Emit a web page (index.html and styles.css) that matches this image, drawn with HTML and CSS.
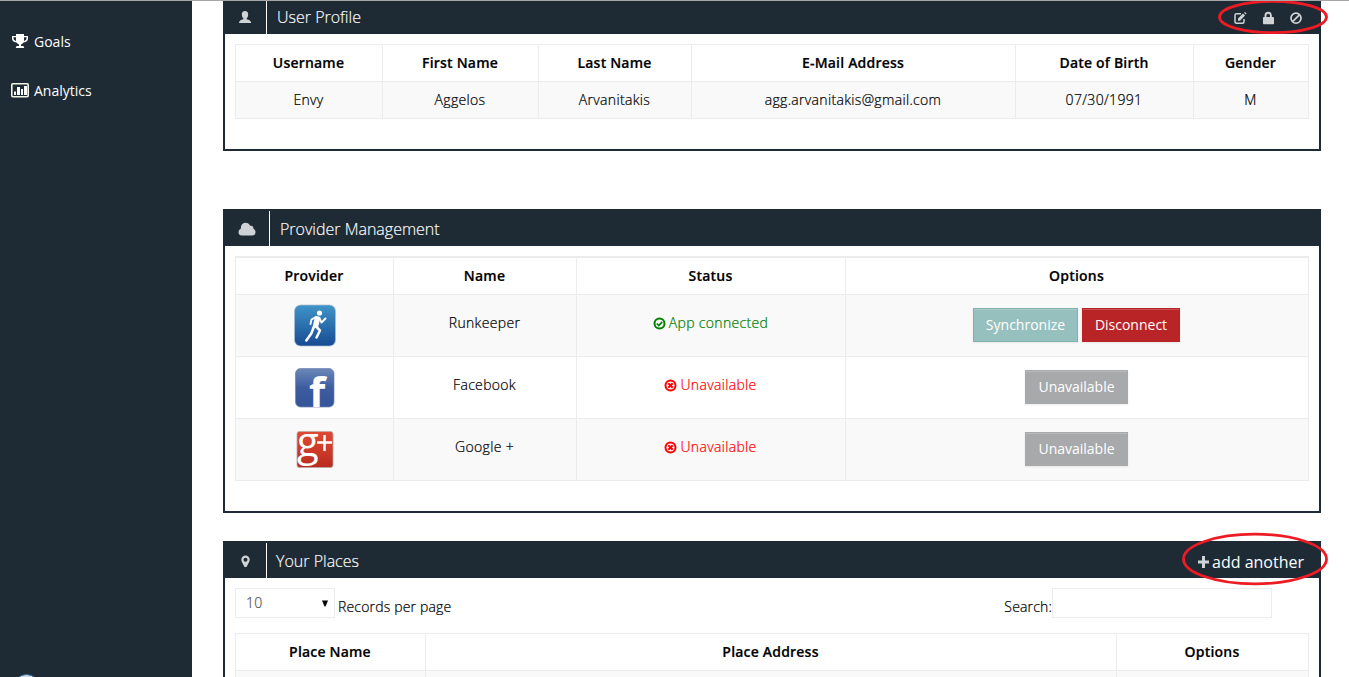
FILE: index.html
```html
<!DOCTYPE html>
<html lang="en">
<head>
<meta charset="utf-8">
<title>User Profile</title>
<link rel="stylesheet" href="styles.css">
</head>
<body>
<div class="page">
  <nav class="sidebar">
    <a class="nav-item"><svg class="nav-icon" width="18" height="18" viewBox="0 0 18 18"><path d="M5 1h8v2h4v2.500q0 3.500-4.500 4-1 1.500-2.500 2v1.500h2q1 0 1.200 2H4.800q.2-2 1.200-2h2v-1.500q-1.500-.5-2.500-2Q1 9 1 5.500V3h4zM2.500 4.200v1.300q0 1.800 2.400 2.500Q5 6 5 4.200zm10.500 0q0 2 .1 3.800 2.400-.7 2.400-2.500V4.200z" fill="#fff" fill-rule="evenodd"/></svg><span>Goals</span></a>
    <a class="nav-item"><svg class="nav-icon" width="18" height="18" viewBox="0 0 18 18"><rect x=".8" y="1.800" width="16.400" height="13" rx="1" fill="none" stroke="#f3f3e8" stroke-width="1.600"/><path d="M3 9.500h2V13H3zM6 5h3v8H6zM10 7h2v6h-2zM13 4h3v9h-3z" fill="#fff"/></svg><span>Analytics</span></a>
    <span class="orb"></span>
  </nav>
  <main class="content">
    <section class="panel profile">
      <header class="panel-head">
        <div class="head-icon"><svg width="14" height="14" viewBox="0 0 14 14"><path d="M7 0q3.200 0 3.200 3.500 0 2.500-1.500 3.700v1.100q4 .7 4.500 3.700H1q.3-3 4.300-3.700V7.200Q3.800 6 3.800 3.500 3.800 0 7 0z" fill="#d0d3d5"/></svg></div>
        <h2>User Profile</h2>
        <div class="tools">
          <svg width="14" height="14" viewBox="0 0 14 14"><path d="M8 2.800H3.500Q2 2.800 2 4.300v6.400q0 1.500 1.500 1.500h6q1.500 0 1.500-1.500V8" fill="none" stroke="#d0d3d5" stroke-width="1.500"/><path d="M5 9.800V7.500L10 2.600l2 2L7 9.800zM11 1.800l1-.9 1.600 1.600-.8.900z" fill="#d0d3d5"/></svg>
          <svg width="14" height="14" viewBox="0 0 14 14"><path d="M4.500 7V4.500a2.700 2.700 0 0 1 5.400 0V7" fill="none" stroke="#d0d3d5" stroke-width="1.900"/><rect x="2" y="6" width="11" height="7.300" rx=".8" fill="#d0d3d5"/></svg>
          <svg width="14" height="14" viewBox="0 0 14 14"><circle cx="7" cy="7.200" r="5" fill="none" stroke="#d0d3d5" stroke-width="1.700"/><path d="M3.600 10.600l6.800-6.800" stroke="#d0d3d5" stroke-width="1.700"/></svg>
        </div>
        <svg class="ring ring-tools" width="110" height="36" viewBox="0 0 110 36"><ellipse cx="55" cy="18" rx="53.500" ry="15.700"/></svg>
      </header>
      <table class="grid">
        <colgroup><col class="w147"><col class="w156"><col class="w153"><col class="w324"><col class="w178"><col class="w115"></colgroup>
        <tr><th>Username</th><th>First Name</th><th>Last Name</th><th>E-Mail Address</th><th>Date of Birth</th><th>Gender</th></tr>
        <tr class="odd"><td>Envy</td><td>Aggelos</td><td>Arvanitakis</td><td>agg.arvanitakis@gmail.com</td><td>07/30/1991</td><td>M</td></tr>
      </table>
    </section>

    <section class="panel providers">
      <header class="panel-head">
        <div class="head-icon wide"><svg width="18" height="14" viewBox="0 0 18 14"><path d="M4 13.500Q.5 13.500.5 10q0-2.500 2.300-3.200-.2-5.500 4.700-6 3.300 0 4.600 3 3.300-.6 3.400 3Q17.500 7.700 17.500 10q0 3.500-3.500 3.500z" fill="#d0d3d5"/></svg></div>
        <h2>Provider Management</h2>
      </header>
      <table class="grid double">
        <colgroup><col class="w158"><col class="w183"><col class="w269"><col class="w463"></colgroup>
        <tr><th>Provider</th><th>Name</th><th>Status</th><th>Options</th></tr>
        <tr class="tall odd">
          <td><svg class="logo" width="44" height="44" viewBox="0 0 44 44"><defs><linearGradient id="run" x2="0" y2="1"><stop offset="0" stop-color="#3f94c9"/><stop offset="1" stop-color="#184b92"/></linearGradient></defs><rect x="1.500" y="2" width="41" height="41" rx="6" fill="url(#run)" stroke="#a9bfd2" stroke-width=".7"/><circle cx="26.500" cy="10" r="2.600" fill="#fff"/><path d="M23 14l-4.500 2.500-1 4.500M26.500 15.500l2 4 4-4" fill="none" stroke="#fff" stroke-width="1.900" stroke-linecap="round" stroke-linejoin="round"/><path d="M22 13q4-.5 5.500 1.500L25 24.500l-5.500.5z" fill="#fff"/><path d="M20.800 24l-2.500 6.500-5 7M23.500 24l3.500 3.500-3.500 7" fill="none" stroke="#fff" stroke-width="2.500" stroke-linecap="round" stroke-linejoin="round"/></svg></td>
          <td>Runkeeper</td>
          <td class="ok"><svg class="mark" width="13" height="13" viewBox="0 0 13 13"><circle cx="6.500" cy="6.500" r="5" fill="none" stroke="currentColor" stroke-width="2"/><path d="M3.800 6.500l2 2 3.500-3.600" fill="none" stroke="currentColor" stroke-width="1.700"/></svg> App connected</td>
          <td><span class="btn sync">Synchronize</span><span class="btn stop">Disconnect</span></td>
        </tr>
        <tr class="tall">
          <td><svg class="logo" width="44" height="44" viewBox="0 0 44 44"><defs><linearGradient id="fb" x2="0" y2="1"><stop offset="0" stop-color="#6b88b7"/><stop offset=".5" stop-color="#3d5d9f"/><stop offset="1" stop-color="#345499"/></linearGradient></defs><rect x="2.500" y="3.500" width="38.500" height="38.500" rx="5" fill="url(#fb)" stroke="#6b83b4" stroke-width=".7"/><text class="f-letter" x="16" y="41.500">f</text></svg></td>
          <td>Facebook</td>
          <td class="bad"><svg class="mark" width="13" height="13" viewBox="0 0 13 13"><circle cx="6.500" cy="6.500" r="5" fill="none" stroke="currentColor" stroke-width="2"/><path d="M4.300 4.300l4.400 4.400M8.700 4.300L4.300 8.700" stroke="currentColor" stroke-width="2"/></svg> Unavailable</td>
          <td><span class="btn off">Unavailable</span></td>
        </tr>
        <tr class="tall odd">
          <td><svg class="logo" width="44" height="44" viewBox="0 0 44 44"><defs><linearGradient id="gp" x2="0" y2="1"><stop offset="0" stop-color="#e04a34"/><stop offset="1" stop-color="#b92b20"/></linearGradient></defs><rect x="4" y="4.500" width="36" height="36" rx="2.500" fill="url(#gp)" stroke="#b9aaa6" stroke-width=".8"/><text class="g-letter" x="4" y="28.500">g</text><path d="M31.500 8v16M24 15.500h15" stroke="#fff" stroke-width="2.500"/></svg></td>
          <td>Google +</td>
          <td class="bad"><svg class="mark" width="13" height="13" viewBox="0 0 13 13"><circle cx="6.500" cy="6.500" r="5" fill="none" stroke="currentColor" stroke-width="2"/><path d="M4.300 4.300l4.400 4.400M8.700 4.300L4.300 8.700" stroke="currentColor" stroke-width="2"/></svg> Unavailable</td>
          <td><span class="btn off">Unavailable</span></td>
        </tr>
      </table>
    </section>

    <section class="panel places">
      <header class="panel-head">
        <div class="head-icon"><svg width="14" height="14" viewBox="0 0 14 14"><path d="M7.500 1.500a4.200 4.200 0 0 1 4.200 4.200q0 1.500-1 3L8.500 13h-2L4.300 8.700q-1-1.500-1-3a4.200 4.200 0 0 1 4.200-4.200zm0 2.200a2 2 0 1 0 0 4 2 2 0 0 0 0-4z" fill="#d0d3d5" fill-rule="evenodd"/></svg></div>
        <h2>Your Places</h2>
        <div class="add"><svg width="12" height="12" viewBox="0 0 12 12"><path d="M4 0h3v4.500H11v3H7V12H4V7.500H0v-3h4z" fill="#d0d3d5"/></svg><span>add another</span></div>
        <svg class="ring ring-add" width="148" height="54" viewBox="0 0 148 54"><ellipse cx="74" cy="27" rx="71.500" ry="24.800"/></svg>
      </header>
      <div class="filters">
        <div class="select"><span>10</span><svg width="6" height="7" viewBox="0 0 6 7"><path d="M0 .5h6L3.500 6.500h-1z" fill="#000"/></svg></div>
        <span class="per-page">Records per page</span>
        <label class="search">Search:</label><div class="search-box"></div>
      </div>
      <table class="grid">
        <colgroup><col class="w190"><col class="w691"><col class="w192"></colgroup>
        <tr><th>Place Name</th><th>Place Address</th><th>Options</th></tr>
        <tr class="odd"><td></td><td></td><td></td></tr>
      </table>
    </section>
  </main>
</div>
</body>
</html>
```
FILE: styles.css
```css
* { box-sizing: border-box; }
body { margin: 0; height: 677px; overflow: hidden; background: #fff; color: #000; font: 300 14px/20px "Open Sans", "Noto Sans", sans-serif; }
.page { display: flex; height: 677px; overflow: hidden; border-top: 1px solid #a6a6a6; }
.sidebar { position: relative; width: 192px; flex: none; height: 677px; background: #1e2b35; color: #fff; padding: 16px 0 0 11px; font-weight: 400; }
.nav-item { display: flex; align-items: center; height: 49px; gap: 5px; }
.orb { position: absolute; left: 13px; top: 673px; width: 27px; height: 27px; border-radius: 50%; background: #d5dbe5; border: 1px solid #2d6596; }
.content { width: 1098px; margin-left: 31px; flex: none; }
.panel { border: 2px solid #1e2b35; border-top: 0; background: #fff; }
.profile { height: 150px; }
.providers { height: 304px; margin-top: 58px; }
.places { height: 200px; margin-top: 28px; }
.panel-head { position: relative; display: flex; height: 37px; margin: 0 -2px; padding-top: 2px; background: #1e2b35; color: #fff; }
.profile .panel-head { height: 33px; padding-top: 0; }
.head-icon { width: 44px; border-right: 1px solid #fff; display: flex; align-items: center; justify-content: center; }
.head-icon.wide { width: 47px; padding-left: 2px; }
.head-icon svg { display: block; }
h2 { margin: 0 0 0 10px; font-size: 16px; font-weight: 300; line-height: 32px; -webkit-text-stroke: .15px; }
.providers h2, .places h2 { line-height: 36px; }
.tools { margin-left: auto; display: flex; gap: 14px; align-items: center; padding-right: 18px; }
.ring { position: absolute; overflow: visible; }
.ring ellipse { fill: none; stroke: #ed1c24; stroke-width: 2.8; }
.ring-tools { left: 994.5px; top: -2px; }
.ring-add { left: 957.5px; top: -9px; }
.grid { width: 1074px; table-layout: fixed; border-collapse: separate; border-spacing: 0; margin: 10px 0 0 10px; border: solid #ececec; border-width: 1px 0 0 1px; text-align: center; }
.grid.double { border-top-width: 2px; }
.grid th, .grid td { height: 37px; padding: 0 1px 0 0; border: solid #ececec; border-width: 0 1px 1px 0; vertical-align: middle; }
.grid th { font-weight: 600; letter-spacing: .2px; -webkit-text-stroke: .2px; }
.grid td { letter-spacing: .33px; -webkit-text-stroke: .22px; }
.odd td { background: #f9f9f9; }
.grid .tall td { height: 62px; vertical-align: top; padding-top: 18px; }
.grid .tall td:first-child { padding: 8px 0 0; }
.grid .tall td:last-child { padding: 13px 2px 0 0; letter-spacing: 0; -webkit-text-stroke: 0; }
.logo { display: block; margin: 0 auto; overflow: visible; }
.f-letter { font: 700 42px "Open Sans", sans-serif; fill: #fff; }
.g-letter { font: 400 40px "Open Sans", sans-serif; fill: #fff; letter-spacing: 0; }
.ok { color: #008000; }
.bad { color: #f00; }
.mark { vertical-align: -2px; margin-right: -1px; }
.btn { display: inline-block; height: 34px; line-height: 32px; border: 1px solid; padding-left: 1px; color: #fff; font-weight: 400; box-shadow: inset 0 1px 0 rgba(255,255,255,.2), 0 1px 2px rgba(0,0,0,.08); }
.sync { width: 105px; background: #96c0be; border-color: #80b2ae; margin-right: 4px; }
.stop { width: 98px; background: #b92527; border-color: #b92527; }
.off { width: 103px; background: #a7a9ab; border-color: #a7a9ab; }
.add { margin-left: auto; display: flex; align-items: center; gap: 2px; padding: 3px 17px 0 0; font-size: 16px; font-weight: 400; }
.filters { display: flex; padding: 10px 47px 0 10px; letter-spacing: .17px; -webkit-text-stroke: .22px; }
.select { width: 100px; height: 30px; border: 1px solid #ececec; display: flex; align-items: center; justify-content: space-between; padding: 0 6px 0 10px; color: #555; }
.per-page { padding: 9px 0 0 3px; }
.search { margin-left: auto; padding-top: 9px; }
.search-box { width: 220px; height: 30px; border: 1px solid #ececec; }
.places .grid { margin-top: 15px; }
.places h2 { margin-left: 9px; }
.w115 { width: 115px; } .w147 { width: 147px; } .w153 { width: 153px; }
.w156 { width: 156px; } .w158 { width: 158px; } .w178 { width: 178px; }
.w183 { width: 183px; } .w190 { width: 190px; } .w192 { width: 192px; }
.w269 { width: 269px; } .w324 { width: 324px; } .w463 { width: 463px; } .w691 { width: 691px; }
```
